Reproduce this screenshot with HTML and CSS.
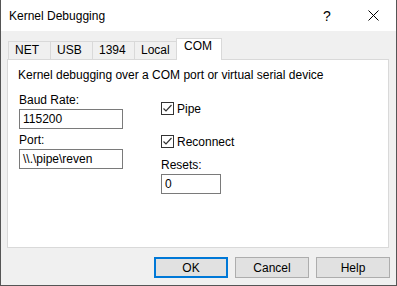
FILE: index.html
```html
<!DOCTYPE html>
<html lang="en">

<head>
    <meta charset="utf-8">
    <title>Kernel Debugging</title>
    <link rel="stylesheet" href="styles.css">
</head>

<body>
    <div class="dialog">
        <header class="titlebar">
            <span class="title">Kernel Debugging</span>
            <span class="capbtn">?</span>
            <span class="capbtn">
                <svg width="11" height="11" viewBox="0 0 11 11"><path d="M0.5 0.5 L10.5 10.5 M10.5 0.5 L0.5 10.5" stroke="#000" stroke-width="1"/></svg>
            </span>
        </header>

        <main class="client">
            <nav class="tabs">
                <span class="tab">NET</span>
                <span class="tab">USB</span>
                <span class="tab">1394</span>
                <span class="tab">Local</span>
                <span class="tab valgt">COM</span>
            </nav>

            <section class="panel">
                <p class="desc">Kernel debugging over a COM port or virtual serial device</p>
                <div class="cols">
                    <div class="col left">
                        <label>Baud Rate:</label>
                        <div class="field">115200</div>
                        <label class="gap">Port:</label>
                        <div class="field">\\.\pipe\reven</div>
                    </div>
                    <div class="col right">
                        <div class="check">
                            <span class="box"><svg width="11" height="11" viewBox="0 0 11 11"><path d="M1.5 5.5 L4 8 L9.5 2" fill="none" stroke="#333" stroke-width="1.2"/></svg></span>
                            Pipe
                        </div>
                        <div class="check second">
                            <span class="box"><svg width="11" height="11" viewBox="0 0 11 11"><path d="M1.5 5.5 L4 8 L9.5 2" fill="none" stroke="#333" stroke-width="1.2"/></svg></span>
                            Reconnect
                        </div>
                        <label class="resets">Resets:</label>
                        <div class="field small">0</div>
                    </div>
                </div>
            </section>

            <footer class="buttons">
                <button class="btn default">OK</button>
                <button class="btn">Cancel</button>
                <button class="btn">Help</button>
            </footer>
        </main>
    </div>
</body>

</html>
```

FILE: styles.css
```css
* {
    box-sizing: border-box;
}

body {
    margin: 0;
    font-family: "Liberation Sans", Arial, sans-serif;
    font-size: 12px;
    color: #000;
}

.dialog {
    width: 397px;
    height: 286px;
    border: 1px solid #555;
    border-top: none;
    display: flex;
    flex-direction: column;
    background: #f0f0f0;
}

.titlebar {
    height: 31px;
    background: #fff;
    display: flex;
    align-items: center;
    padding-left: 8px;
}

.title {
    flex: 1;
    font-size: 12px;
}

.capbtn {
    width: 46px;
    height: 31px;
    display: flex;
    align-items: center;
    justify-content: center;
    font-size: 14px;
}

.client {
    flex: 1;
    padding: 7px 7px 0 6px;
    display: flex;
    flex-direction: column;
}

.tabs {
    display: flex;
    align-items: flex-end;
    padding-left: 1px;
    height: 21px;
}

.tab {
    height: 18px;
    padding: 0 6px;
    border: 1px solid #d9d9d9;
    border-bottom: none;
    margin-right: -1px;
    line-height: 16px;
    width: 43px;
}

.tab.valgt {
    height: 22px;
    width: 46px;
    background: #fff;
    position: relative;
    margin-bottom: -1px;
    z-index: 1;
    line-height: 14px;
    padding-left: 7px;
}

.panel {
    height: 189px;
    background: #fff;
    border: 1px solid #d9d9d9;
    padding: 8px 10px 0 10px;
}

.desc {
    margin: 0;
    line-height: 14px;
}

.cols {
    display: flex;
    margin-top: 11px;
}

.col {
    display: flex;
    flex-direction: column;
}

.left {
    width: 104px;
    margin-left: 1px;
}

.right {
    margin-left: 38px;
    margin-top: 9px;
}

label {
    line-height: 14px;
    margin-bottom: 2px;
}

label.gap {
    margin-top: 4px;
}

.field {
    height: 20px;
    border: 1px solid #7a7a7a;
    padding-left: 3px;
    line-height: 18px;
    width: 104px;
}

.field.small {
    width: 60px;
}

.check {
    display: flex;
    align-items: center;
    gap: 3px;
    height: 13px;
}

.check.second {
    margin-top: 20px;
}

.box {
    width: 13px;
    height: 13px;
    border: 1px solid #333;
    display: flex;
    align-items: center;
    justify-content: center;
}

.resets {
    margin-top: 10px;
}

.buttons {
    display: flex;
    justify-content: flex-end;
    gap: 7px;
    margin-top: 9px;
    margin-right: -1px;
}

.btn {
    width: 74px;
    height: 21px;
    font-family: inherit;
    font-size: 12px;
    background: #e1e1e1;
    border: 1px solid #adadad;
    padding: 0;
}

.btn.default {
    border: 2px solid #0078d7;
}
```
